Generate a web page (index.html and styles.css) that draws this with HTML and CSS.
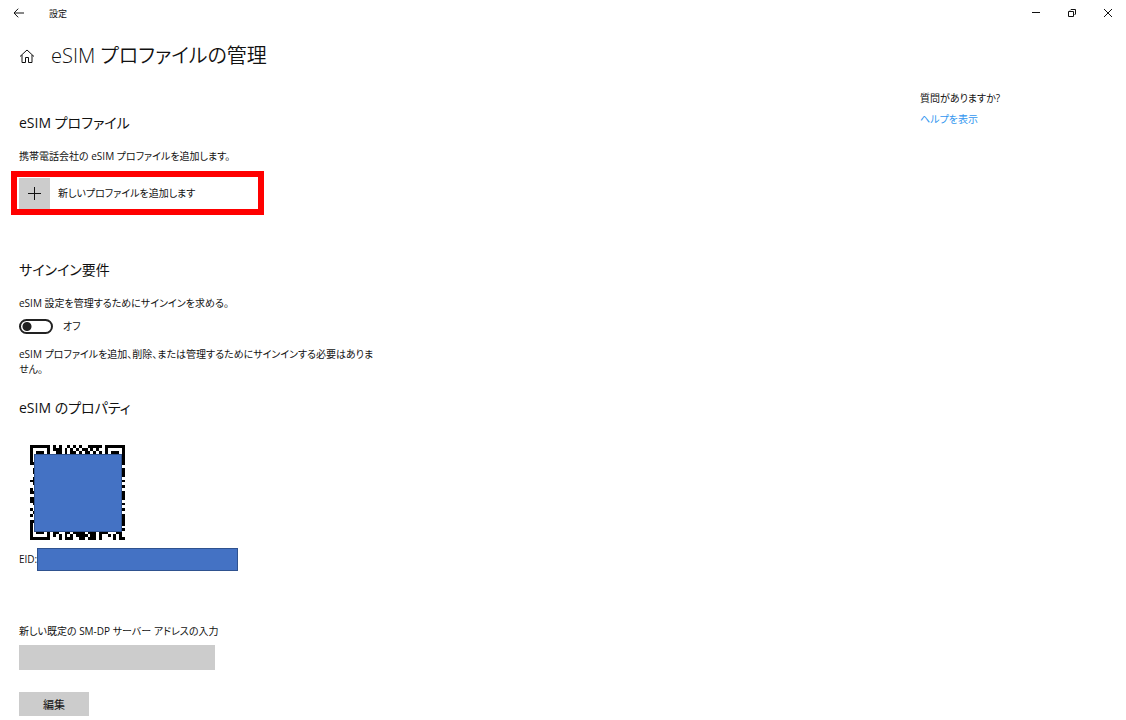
FILE: index.html
```html
<!DOCTYPE html>
<html lang="ja">
<head>
<meta charset="utf-8">
<title>設定</title>
<link rel="stylesheet" href="styles.css">
</head>
<body>
<header class="titlebar">
  <button class="icon-button" type="button" aria-label="戻る">
    <svg width="12" height="10" viewBox="0 0 12 10"><path d="M11 5H1M5.200.700L1 5l4.200 4.300"/></svg>
  </button>
  <span class="app-name">設定</span>
  <div class="window-controls">
    <button class="window-button" type="button" aria-label="最小化"><svg width="10" height="10" viewBox="0 0 10 10"><path d="M1 4.500h8"/></svg></button>
    <button class="window-button" type="button" aria-label="元に戻す"><svg width="10" height="10" viewBox="0 0 10 10"><path d="M1.500 3.500h5v5h-5zM3 2.500l1-1h4.500V6l-1 1"/></svg></button>
    <button class="window-button" type="button" aria-label="閉じる"><svg width="10" height="10" viewBox="0 0 10 10"><path d="M1 1l8 8M9 1L1 9"/></svg></button>
  </div>
</header>
<div class="page-header">
  <button class="icon-button" type="button" aria-label="ホーム">
    <svg width="16" height="16" viewBox="0 0 16 16"><path d="M1 8.500L8 2l7 6.500M3 7v7.500h3.500v-5h3v5H13V7"/></svg>
  </button>
  <h1>eSIM プロファイルの管理</h1>
</div>
<div class="layout">
  <main class="content">
    <section class="profiles">
      <h2>eSIM プロファイル</h2>
      <p>携帯電話会社の eSIM プロファイルを追加します。</p>
      <button class="add-profile" type="button">
        <span class="add-tile"><svg width="13" height="13" viewBox="0 0 13 13"><path d="M6.500 0v13M0 6.500h13"/></svg></span>
        <span>新しいプロファイルを追加します</span>
      </button>
    </section>
    <section class="signin">
      <h2>サインイン要件</h2>
      <p id="signin-text">eSIM 設定を管理するためにサインインを求める。</p>
      <div class="toggle-row">
        <input class="toggle" id="signin" type="checkbox" role="switch" aria-describedby="signin-text">
        <label for="signin">オフ</label>
      </div>
      <p class="note">eSIM プロファイルを追加、削除、または管理するためにサインインする必要はありません。</p>
    </section>
    <section class="properties">
      <h2>eSIM のプロパティ</h2>
      <div class="qr">
        <svg width="95" height="95" viewBox="0 0 33 33" aria-hidden="true">
          <path class="finder" d="M.5.5h6v6h-6zM26.500.5h6v6h-6zM.5 26.500h6v6h-6z"/>
          <path class="block" d="M2 2h3v3H2zM28 2h3v3h-3zM2 28h3v3H2z"/>
          <path class="modules" d="M8 .5h1M10 .5h1M13 .5h1M15 .5h1M17 .5h1M20 .5h5M8 1.500h3M12 1.500h1M14 1.500h1M16 1.500h1M18 1.500h2M21 1.500h1M23 1.500h1M9 2.500h2M12 2.500h1M14 2.500h2M17 2.500h1M19 2.500h2M22 2.500h1M24 2.500h1
          M1 8.500h1M1 9.500h1M1 11.500h1M0 12.500h2M1 13.500h1M0 15.500h1M0 16.500h2M0 18.500h2M0 19.500h2M1 20.500h1M0 22.500h1M1 23.500h1M0 24.500h1
          M32 8.500h1M32 9.500h1M32 10.500h1M32 12.500h1M32 14.500h1M32 16.500h1M32 17.500h1M32 18.500h1M32 20.500h1M32 22.500h1M32 24.500h1M32 25.500h1M32 26.500h1M32 27.500h1M32 29.500h1
          M8 30.500h2M12 30.500h2M15 30.500h4M20 30.500h3M24 30.500h3M30 30.500h2M8 31.500h1M10 31.500h1M12 31.500h1M14 31.500h1M16 31.500h4M21 31.500h2M24 31.500h1M27 31.500h1M29 31.500h1M31 31.500h1M10 32.500h1M12 32.500h3M17 32.500h2M20 32.500h3M24 32.500h1M29 32.500h1M31 32.500h2"/>
        </svg>
        <div class="mask qr-mask"></div>
      </div>
      <div class="eid"><span class="eid-label">EID:</span><div class="mask eid-mask"></div></div>
      <label class="address-label" for="address">新しい既定の SM-DP サーバー アドレスの入力</label>
      <input class="address" id="address" type="text">
      <button class="edit" type="button">編集</button>
    </section>
  </main>
  <aside class="help">
    <p>質問がありますか?</p>
    <a href="#">ヘルプを表示</a>
  </aside>
</div>
</body>
</html>
```
FILE: styles.css
```css
* { box-sizing: border-box; }
body {
  margin: 0;
  background: #fff;
  color: #111;
  font: 10px/15px "Open Sans", "Noto Sans CJK JP", sans-serif;
  font-feature-settings: "palt";
}
h1, h2, p { margin: 0; font-weight: 400; }
button, input { font: inherit; color: inherit; font-feature-settings: inherit; }
button { border: 0; padding: 0; background: none; }
svg { display: block; fill: none; stroke: #111; }
.titlebar { display: flex; align-items: center; height: 26px; padding-left: 13px; }
.app-name { margin-left: 24px; font-size: 9px; }
.icon-button { display: flex; }
.window-controls { display: flex; margin-left: auto; }
.window-button { display: flex; width: 36px; height: 26px; align-items: center; justify-content: center; }
.page-header { display: flex; align-items: center; gap: 16px; margin-top: 16px; padding-left: 19px; }
h1 { font-size: 20px; line-height: 28px; font-weight: 350; }
h2 { font-size: 14px; line-height: 20px; margin-bottom: 16px; }
.layout { display: grid; grid-template-columns: 1fr 206px; padding-left: 19px; }
.content { padding-top: 43px; }
.add-profile {
  display: flex;
  align-items: center;
  gap: 8px;
  width: 253px;
  margin: 7px 0 0 -8px;
  padding: 1px 2px 0;
  border: 6px solid #f00;
}
.add-tile { display: flex; align-items: center; justify-content: center; width: 31px; height: 31px; background: #ccc; }
.signin { margin-top: 45px; }
.toggle-row { display: flex; align-items: center; gap: 10px; margin-top: 8px; }
.toggle {
  appearance: none;
  width: 34px;
  height: 15px;
  margin: 0;
  border: 2px solid #222;
  border-radius: 8px;
  background: radial-gradient(circle at 6px 50%, #222 4px, transparent 5px);
}
.note { max-width: 356px; margin-top: 13px; }
.properties { margin-top: 21px; }
.qr { position: relative; width: 95px; margin: 27px 0 0 11px; }
.qr svg { stroke: none; shape-rendering: crispEdges; }
.qr .finder, .qr .modules { stroke: #000; stroke-width: 1; }
.qr .block { fill: #000; }
.mask { background: #4472c4; border: 1px solid #2f528f; }
.qr-mask { position: absolute; inset: 9px 3px 8px 4px; }
.eid { display: flex; align-items: center; margin-top: 8px; }
.eid-label { width: 18px; white-space: nowrap; }
.eid-mask { position: relative; width: 201px; height: 23px; }
.address-label { display: block; margin-top: 53px; }
.address { display: block; width: 196px; height: 25px; margin-top: 6px; padding: 0 8px; border: 0; background: #ccc; }
.edit { display: block; width: 70px; height: 24px; margin-top: 22px; font-size: 11px; background: #ccc; }
.help { padding-top: 21px; }
.help a { display: inline-block; margin-top: 6px; color: #3296f0; text-decoration: none; }
```
